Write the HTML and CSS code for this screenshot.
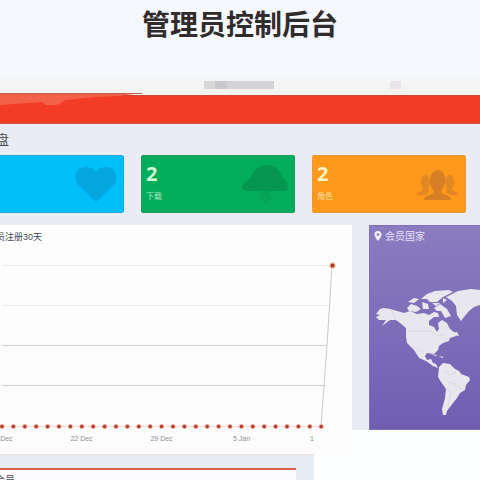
FILE: index.html
```html
<!DOCTYPE html>
<html lang="zh-CN">
<head>
<meta charset="utf-8">
<title>管理员控制后台</title>
<link rel="stylesheet" href="styles.css">
</head>
<body>
<header class="hero"><h1>管理员控制后台</h1></header>
<div class="topbar">
  <svg class="mosaic" width="276" height="10" viewBox="0 0 276 10" aria-hidden="true">
    <path fill="#d3d3d5" d="M79 1h70v8H79z"/><path fill="#c9c8cb" d="M90 1h12v8H90z"/><path fill="#d8d7d8" d="M79 1h11v8H79z"/><path fill="#e8e4e7" d="M265 1h11v8h-11z"/>
  </svg>
</div>
<div class="redbar">
  <svg class="ribbon" width="144" height="14" viewBox="0 0 144 14" aria-hidden="true">
    <path fill="#f3614a" d="M0 0H142L118 3L95 4L65 7L60 11L55 12H46L42 9L0 12z"/>
    <path fill="none" stroke="#bd604e" d="M0 .5H142"/>
  </svg>
</div>
<main class="board">
  <h2>仪表盘</h2>
  <section class="cards">
    <article class="card blue">
      <svg class="icon" width="44" height="40" viewBox="0 0 44 40" aria-hidden="true"><path fill="#04a6df" d="M22 38L4 21C-1 14 2 3 11 3c6 0 9 2 11 6 2-4 5-6 11-6 9 0 12 11 7 18z"/></svg>
    </article>
    <article class="card green">
      <strong>2</strong><span>下载</span>
      <svg class="icon" width="48" height="42" viewBox="0 0 48 42" aria-hidden="true"><path fill="#059650" d="M6 27C0 27 0 23 3 19l7-5C12 6 19 1 26 1c8 0 13 5 15 12 6 4 8 12 4 14z"/><path fill="#04a556" d="M20 27h9v5h5l-9 8-10-8h5z"/></svg>
    </article>
    <article class="card orange">
      <strong>2</strong><span>角色</span>
      <svg class="icon" width="44" height="40" viewBox="0 0 44 40" aria-hidden="true"><g fill="#e18822"><path d="M1 31c0-4 5-3 6-6-3-4-3-13 2-14 5 0 6 8 3 14l1 3-4 3zM42 31c0-4-5-3-6-6 3-4 3-13-2-14-5 0-6 8-3 14l-1 3 4 3z"/></g><path fill="#d67f24" d="M8 36c0-6 10-4 10-9-6-6-6-20 4-21 9 1 9 15 3 21 0 5 10 3 10 9z"/></svg>
    </article>
    <article class="card red"></article>
  </section>
  <section class="panels">
    <article class="chart">
      <h3>会员注册30天</h3>
      <svg class="plot" width="382" height="180" viewBox="-30 0 382 180" aria-hidden="true">
        <g fill="none">
          <path stroke="#ececee" d="M2 14.5H330M2 54.5H328"/>
          <path stroke="#cfcfd1" d="M2 94.5H327M2 134.5H325"/>
          <path stroke="#f8d9d3" d="M0 175.5H321"/>
          <path stroke="#cbcbcd" d="M321 175L327 95L332 14"/>
          <path stroke="#f7b3a4" stroke-width="5" stroke-linecap="round" stroke-dasharray="0 11.4" d="M2 175.5H322"/>
          <path stroke="#b53d33" stroke-width="3.6" stroke-linecap="round" stroke-dasharray="0 11.4" d="M2 175.5H322"/>
        </g>
        <circle cx="332.5" cy="14.5" r="3" fill="#f7b08f"/><circle cx="332.5" cy="14.5" r="2" fill="#a43f23"/>
      </svg>
      <div class="axis"><span>15 Dec</span><span>22 Dec</span><span>29 Dec</span><span>5 Jan</span><span class="cut">1</span></div>
    </article>
    <article class="map">
      <h3><svg width="8" height="10" viewBox="0 0 8 10" aria-hidden="true"><path fill="#f4f1fb" fill-rule="evenodd" d="M4 0C1.5 0 .5 1.8.5 3.5.5 6 4 10 4 10s3.500-4 3.500-6.500C7.500 1.800 6.500 0 4 0zm0 2.200a1.400 1.400 0 1 1 0 2.800 1.400 1.400 0 0 1 0-2.800z"/></svg>会员国家</h3>
      <svg class="world" width="111" height="150" viewBox="369 280 111 150" role="img" aria-label="世界地图">
        <g fill="#e9e7ee">
          <path d="M376 314L380 309L384 308L390 309L397 311L404 313L410 311L417 314L424 313L429 315L434 312L438 313L439 317L434 317L429 321L429 325L434 327L437 332L439 329L438 323L442 320L447 323L450 329L455 333L456 336L450 338L449 341L443 343L439 346L438 350L434 354L427 353L425 356L427 360L431 359L433 363L436 364L438 368L433 366L426 361L419 358L414 350L407 343L406 337L406 328L400 323L396 320L390 320L386 323L382 326L386 320L379 320L376 317L380 315z"/>
          <path d="M407 308L411 304L417 306L421 309L416 312L409 311zM408 302L414 298L419 299L414 303zM422 302L428 304L429 309L423 309zM421 299L427 294L435 291L449 290L453 292L443 297L437 302L430 302L427 299zM434 308L440 304L447 309L451 316L445 318L441 311L437 311zM432 303L440 303L436 306zM443 298L447 300L443 303z"/>
          <path d="M446 297L458 291L471 289L480 290V305L474 307L469 311L464 317L461 321L457 315L456 306L452 301z"/>
          <path d="M452 333l5-1 2 4-6-1zM430 354l7 1-1 1zM439 356l5 1-2 1z"/>
          <path d="M439 367L443 363L450 364L455 369L459 371L461 374L469 377L470 380L466 385L465 390L460 393L457 398L453 403L450 407L447 411L446 415H443L442 409L445 398L446 389L441 382L438 377z"/>
        </g>
        <g fill="none" stroke="#d5d2da" stroke-width=".8"><path d="M391 309L396 320M406 331H431L438 336L445 334M410 346L417 348L423 352M445 371L450 375L456 372M448 382L455 384L461 389M447 388L451 392L448 407"/></g>
      </svg>
    </article>
  </section>
</main>
<section class="lower">
  <article class="members"><h3>新会员</h3></article>
</section>
</body>
</html>
```
FILE: styles.css
```css
* { box-sizing: border-box; }
html { overflow: hidden; }
body {
  margin: 0;
  height: 100vh;
  overflow: hidden;
  background: #fdfefe;
  color: #464a54;
  font-family: "Noto Sans", "Noto Sans CJK SC", sans-serif;
}
h1, h2, h3 { margin: 0; font-weight: 400; }
.hero {
  height: 72px;
  padding-top: 3px;
  text-align: center;
  background: #f6f8ff;
}
.hero h1 {
  font: 700 28px/40px "Noto Sans CJK SC", sans-serif;
  color: #302c2b;
}
.topbar {
  height: 23px;
  padding: 8px 0 0 125px;
  background: linear-gradient(#f6f8fe, #f4f4f3 50%, #f4f3f1);
}
.mosaic { display: block; }
.redbar {
  position: relative;
  height: 29px;
  background: #f23c26;
  border-top: 1px solid #cf452f;
  border-bottom: 1px solid #cf543f;
}
.ribbon { position: absolute; left: 0; top: -3px; }
.board {
  width: 139%;
  height: 306px;
  margin-left: -30px;
  background: #e9ebf5;
}
.board h2 {
  padding-top: 5px;
  font-size: 13px;
  line-height: 20px;
}
.cards {
  display: grid;
  grid-template-columns: repeat(4, 1fr);
  gap: 17px;
  margin-top: 6px;
}
.card {
  position: relative;
  display: flex;
  flex-direction: column;
  height: 58px;
  padding: 6px 4px;
  border: 1px solid;
  border-radius: 2px;
  color: #d5f8d8;
}
.card strong { font-size: 20px; line-height: 24px; }
.card span { font-size: 8px; line-height: 20px; opacity: .8; }
.icon { position: absolute; right: 5px; top: 8px; }
.blue { background: #00bff9; border-color: #0fa9dd; }
.green { background: #04ad5b; border-color: #149c5d; }
.orange { background: #fd981b; border-color: #e29b3f; color: #fff6c5; }
.red { background: #f23c26; }
.panels {
  display: grid;
  grid-template-columns: 382fr 268fr;
  gap: 17px;
  margin-top: 12px;
}
.chart { height: 229px; background: #fdfdfe; }
.chart h3 {
  padding: 3px 0 0 17px;
  font-family: "Liberation Sans", "Noto Sans CJK SC", sans-serif;
  font-size: 9px;
  line-height: 18px;
}
.plot { display: block; margin-top: 5px; }
.axis {
  display: flex;
  gap: 57px;
  padding: 1px 0 0 20px;
  color: #8c8e92;
  font-family: "Liberation Sans", sans-serif;
  font-size: 7px;
  line-height: 14px;
}
.axis span { width: 23px; white-space: nowrap; text-align: center; }
.axis .cut { width: 4px; }
.map {
  height: 205px;
  background: linear-gradient(#8b7cc1, #705eb1);
  border: 1px solid #7e70b6;
}
.map h3 {
  display: flex;
  align-items: center;
  gap: 3px;
  padding: 0 4px;
  color: #e6e0f6;
  font-size: 10px;
  line-height: 20px;
}
.world { display: block; margin: 34px 0 0 -1px; }
.lower {
  width: 65.5%;
  height: 60px;
  margin-top: 24px;
  padding-top: 13px;
  background: #e6edf5;
  border-top: 1px solid #f6dfe3;
}
.members {
  width: 94%;
  height: 60px;
  background: #fafaff;
  border-top: 2px solid #d8604f;
}
.members h3 {
  margin-left: -15px;
  font-size: 10px;
  line-height: 20px;
}
```
